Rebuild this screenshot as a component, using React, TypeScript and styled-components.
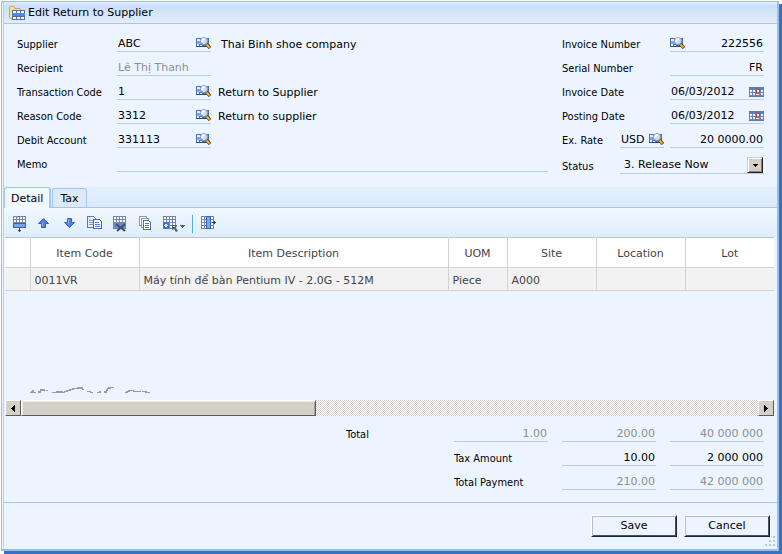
import React, { useState } from "react";
import styled, { createGlobalStyle, css } from "styled-components";

const WIDE = '"DejaVu Sans", Verdana, sans-serif';
const NARROW = '"DejaVu Sans Condensed", "DejaVu Sans", Tahoma, sans-serif';

const GlobalStyle = createGlobalStyle`
  *, *::before, *::after { box-sizing: border-box; }
  body { margin: 0; background: #fff; font: 11px/14px ${WIDE}; color: #000; }
  button, input, select { font: inherit; color: inherit; margin: 0; padding: 0; border: 0; border-radius: 0; background: none; }
  svg { display: block; flex: none; }
`;

const Page = styled.div`
  display: flex;
  min-height: 100vh;
  padding: 1px 3px 3px 1px;
`;

const Dialog = styled.section`
  flex: 1;
  min-width: 0;
  display: flex;
  flex-direction: column;
  padding-left: 1px;
  border: solid #9dbce9;
  border-width: 1px 2px 2px 1px;
  background: #ecf5ff;
  box-shadow: 3px 3px 0 #3571c6;
`;

const DialogInner = styled.div`
  flex: 1;
  min-width: 0;
  display: flex;
  flex-direction: column;
  border-left: 1px solid #b5d0f3;
`;

const TitleBar = styled.header`
  display: flex;
  align-items: center;
  gap: 3px;
  height: 22px;
  padding-left: 4px;
  border-bottom: 1px solid #a9c4ea;
  background: linear-gradient(#e3eefc, #cadef8 20%, #e3eefd);
`;

const Title = styled.h1`
  margin: 0;
  padding-top: 1px;
  font: inherit;
`;

const Form = styled.form`
  display: flex;
  gap: 14px;
  padding: 4px 13px 13px;
`;

const Column = styled.div<{ $side?: boolean }>`
  flex: ${(p) => (p.$side ? "0 0 202px" : "1")};
  min-width: 0;
`;

const Row = styled.div<{ $tall?: boolean }>`
  display: flex;
  align-items: flex-end;
  height: ${(p) => (p.$tall ? 26 : 24)}px;
`;

const Label = styled.label<{ $width: number }>`
  flex: 0 0 ${(p) => p.$width}px;
  font-family: ${NARROW};
`;

const IconButton = styled.button`
  flex: none;
  display: flex;
  align-items: center;
`;

const Field = styled.div<{ $width?: number; $muted?: boolean }>`
  flex: ${(p) => (p.$width ? `0 0 ${p.$width}px` : "1")};
  min-width: 0;
  display: flex;
  align-items: flex-end;
  height: 18px;
  border-bottom: 1px solid #b9cddd;
  color: ${(p) => (p.$muted ? "#8b8f94" : "#000")};
  ${IconButton} { padding-bottom: 2px; }
`;

const TextInput = styled.input<{ $right?: boolean }>`
  flex: 1;
  width: 100%;
  min-width: 0;
  height: 14px;
  padding: 0 1px;
  text-align: ${(p) => (p.$right ? "right" : "left")};
  outline: 0;
`;

const Description = styled.output<{ $indent?: boolean }>`
  padding-left: ${(p) => (p.$indent ? 10 : 7)}px;
  white-space: nowrap;
`;

const StatusField = styled(Field)`
  height: 20px;
  position: relative;
`;

const Select = styled.select`
  flex: 1;
  height: 16px;
  padding-left: 4px;
  appearance: none;
  outline: 0;
`;

const bevel = css`
  background: #d4d0c8;
  border: 1px solid;
  border-color: #fff #5b5b5b #5b5b5b #fff;
`;

const SelectArrow = styled.span`
  ${bevel}
  position: absolute;
  right: 1px;
  top: 3px;
  width: 16px;
  height: 16px;
  display: flex;
  align-items: center;
  justify-content: center;
  border-color: #d4d0c8 #222 #222 #d4d0c8;
  box-shadow: inset 1px 1px 0 #fff, inset -1px -1px 0 #85827c;
  pointer-events: none;
`;

const TabStrip = styled.div`
  display: flex;
  align-items: flex-end;
  gap: 1px;
  height: 21px;
  border-bottom: 1px solid #a3c5ee;
  background: linear-gradient(#e3effd, #dceafb);
`;

const Tab = styled.button<{ $active?: boolean }>`
  height: ${(p) => (p.$active ? 21 : 19)}px;
  margin-bottom: ${(p) => (p.$active ? -1 : 0)}px;
  padding: 1px ${(p) => (p.$active ? 6 : 7)}px 0;
  border: solid #a3c5ee;
  border-width: 1px 1px 0;
  border-right-width: ${(p) => (p.$active ? 2 : 1)}px;
  border-radius: 3px 3px 0 0;
  background: ${(p) => (p.$active ? "#f1f8ff" : "#dbe9fb")};
`;

const ToolBar = styled.div`
  display: flex;
  align-items: center;
  gap: 9px;
  height: 29px;
  padding: 3px 8px 0;
  background: linear-gradient(#f1f8ff, #deedfb);
`;

const MenuButton = styled(IconButton)`
  gap: 2px;
`;

const Separator = styled.span`
  width: 1px;
  height: 18px;
  margin: 0 -2px;
  background: #57a5f5;
  box-shadow: 1px 0 0 #fff;
`;

const GridArea = styled.div`
  flex: 1;
  min-height: 120px;
  display: flex;
  flex-direction: column;
  justify-content: space-between;
  margin: 0 3px 0 1px;
`;

const Table = styled.table`
  width: 100%;
  table-layout: fixed;
  border-collapse: collapse;
  color: #444;
`;

const Col = styled.col<{ $width?: number }>`
  width: ${(p) => (p.$width ? `${p.$width}px` : "auto")};
`;

const cell = css`
  border: solid #cfd2d6;
  border-width: 1px 1px 1px 0;
  overflow: hidden;
  white-space: nowrap;
  &:last-child { border-right: 0; }
`;

const HeadCell = styled.th`
  ${cell}
  height: 30px;
  padding: 2px 0 0;
  background: #fff;
  border-top-color: #bfc3cf;
  font-weight: normal;
`;

const Cell = styled.td`
  ${cell}
  height: 23px;
  padding: 3px 4px 0;
  background: #f2f2f2;
`;

const Traces = styled.svg`
  margin: 0 0 6px 24px;
`;

const ScrollBar = styled.div`
  display: flex;
  height: 16px;
  margin: 0 3px 0 1px;
  background: repeating-conic-gradient(#d4d0c8 0 25%, #fff 0 50%) 0 0 / 2px 2px;
`;

const ScrollButton = styled.button`
  ${bevel}
  flex: none;
  width: 16px;
  display: flex;
  align-items: center;
  justify-content: center;
`;

const ScrollTrack = styled.div`
  flex: 1;
  display: flex;
`;

const Thumb = styled.div`
  ${bevel}
  width: 40%;
  box-shadow: inset 1px 1px 0 #ece9e4, inset -1px 0 0 #a5a29c;
`;

const Totals = styled.div`
  display: grid;
  grid-template-columns: 94px 94px 94px;
  justify-content: end;
  column-gap: 14px;
  padding: 2px 13px 12px;
  border-bottom: 1px solid #a3c5ee;
`;

const TotalRow = styled.div`
  grid-column: 1 / -1;
  display: grid;
  grid-template-columns: subgrid;
  align-items: end;
  height: 24px;
  position: relative;
`;

const TotalLabel = styled.label<{ $outside?: boolean }>`
  font-family: ${NARROW};
  ${(p) => p.$outside && css`
    position: absolute;
    right: 100%;
    bottom: 0;
    width: 108px;
  `}
`;

const Footer = styled.footer`
  display: flex;
  justify-content: flex-end;
  gap: 7px;
  padding: 12px 7px 0;
  height: 46px;
  position: relative;
`;

const PushButton = styled.button`
  width: 86px;
  height: 22px;
  border: 1px solid;
  border-color: #fff #1c2733 #1c2733 #fff;
  box-shadow: inset 1px 1px 0 #b9bcc0, inset -1px -1px 0 #47525e;
  background: #ecf5ff;
`;

const Grip = styled.svg`
  position: absolute;
  right: 2px;
  bottom: 2px;
`;

const FolderIcon = () => (
  <svg width="17" height="14" viewBox="0 0 17 14" aria-hidden="true">
    <path d="M1.500 1.500q0-1 1-1h3q1 0 1 1v1h5q1 0 1 1v9h-10q-1 0-1-1z" fill="#fbe08c" stroke="#c9a560" />
    <g shapeRendering="crispEdges">
      <path d="M4 4h13v10H4z" fill="#4f6da9" />
      <path d="M5 5h3v2H5zM9 5h3v2H9zM13 5h3v2h-3zM5 11h3v2H5zM9 11h3v2H9zM13 11h3v2h-3z" fill="#fff" />
      <path d="M4 7h13v3H4z" fill="#4f86ec" />
    </g>
  </svg>
);

const LookupIcon = () => (
  <svg width="15" height="12" viewBox="0 0 15 12" aria-hidden="true">
    <g shapeRendering="crispEdges">
      <path d="M0 1h13v9H0z" fill="#4a72ba" />
      <path d="M0 9h11v1H0z" fill="#2f4a80" />
      <path d="M1 2h3v2H1zM1 7h2v2H1zM4 8h2v1H4z" fill="#e4edfb" />
      <path d="M1 4h5v3H1z" fill="#7ba5ef" />
    </g>
    <circle cx="8" cy="4" r="3.500" fill="#cfdeee" stroke="#8a9db6" />
    <path d="M6 5a2.500 2.500 0 0 1 3-3" stroke="#fff" strokeWidth="2" fill="none" />
    <path d="M10.500 7l3.500 4" stroke="#5f4520" strokeWidth="3.500" />
    <path d="M10.500 7.500l3 3" stroke="#f3b02c" strokeWidth="2" />
  </svg>
);

const CalendarIcon = () => (
  <svg width="15" height="10" viewBox="0 0 15 10" shapeRendering="crispEdges" aria-hidden="true">
    <path d="M0 0h15v10H0z" fill="#6587c4" />
    <path d="M0 0h15v2H0zM0 9h15v1H0z" fill="#5d7ab3" />
    <path d="M1 3h2v2H1zM4 3h2v2H4zM12 3h2v2h-2zM1 6h2v2H1zM4 6h2v2H4zM7 7h3v1H7zM12 6h2v2h-2z" fill="#eef5ff" />
    <path d="M7 2h4v4H7z" fill="#e0401f" />
    <path d="M8 3h2v2H8z" fill="#fff" />
  </svg>
);

const Triangle = ({ dir }: { dir: "left" | "right" | "down" | "menu" }) => {
  if (dir === "left") return <svg width="4" height="7" viewBox="0 0 4 7" shapeRendering="crispEdges" aria-hidden="true"><path d="M3 0h1v7H3zM2 1h1v5H2zM1 2h1v3H1zM0 3h1v1H0z" /></svg>;
  if (dir === "right") return <svg width="4" height="7" viewBox="0 0 4 7" shapeRendering="crispEdges" aria-hidden="true"><path d="M0 0h1v7H0zM1 1h1v5H1zM2 2h1v3H2zM3 3h1v1H3z" /></svg>;
  if (dir === "down") return <svg width="5" height="3" viewBox="0 0 5 3" shapeRendering="crispEdges" aria-hidden="true"><path d="M0 0h5v1H0zM1 1h3v1H1zM2 2h1v1H2z" /></svg>;
  return <svg width="5" height="8" viewBox="0 0 5 8" shapeRendering="crispEdges" aria-hidden="true"><path d="M0 5h5v1H0zM1 6h3v1H1zM2 7h1v1H2z" fill="#46608f" /></svg>;
};

const SheetIcon = ({ kind }: { kind: "insert" | "delete" | "menu" | "columns" }) => (
  <svg width="16" height="16" viewBox="0 0 16 16" shapeRendering="crispEdges" aria-hidden="true">
    <path d="M1 0h13v13H1z" fill="#7584a8" />
    {[2, 5, 8, 11].map((x) => [1, 4, 7, 10].map((y) => (
      <rect key={`${x}-${y}`} x={x} y={y} width="2" height="2" fill="#fff" />
    )))}
    {kind === "insert" && (
      <>
        <path d="M1 7h13v5H1z" fill="#3d62b1" />
        <path d="M2 8h11v3H2z" fill="#72a4f5" />
        <path d="M1 12h13v1H1z" fill="#eaf4fe" />
        <path d="M7 12h1v4H7zM6 14h3v1H6z" fill="#33435f" />
      </>
    )}
    {kind === "delete" && (
      <>
        <path d="M1 7h13v5H1z" fill="#5f8de4" />
        <path d="M4 8l9 7M13 8l-8 7" stroke="#4b4f56" strokeWidth="2" fill="none" shapeRendering="auto" />
      </>
    )}
    {kind === "menu" && (
      <>
        <path d="M1 6h6v7H1z" fill="#3f74dc" />
        <path d="M2 9h4v1H2zM3 8h2v3H3z" fill="#dcebff" />
        <path d="M10 9h5l-1 3 2 3-2 1-2-3-2 1z" fill="#58606d" shapeRendering="auto" />
        <path d="M11 10h2v1h-2z" fill="#fff" />
      </>
    )}
    {kind === "columns" && (
      <>
        <path d="M6 0h5v13H6z" fill="#3962b3" />
        <path d="M7 1h3v11H7z" fill="#72a8f8" />
        <path d="M12 6h4v1h-4zM14 5h1v3h-1z" fill="#2f3e58" />
      </>
    )}
  </svg>
);

const ArrowIcon = ({ down }: { down?: boolean }) => (
  <svg width="16" height="16" viewBox="0 0 16 16" aria-hidden="true">
    <path
      d={down ? "M5.500 2.500h4v4h3l-5 5-5-5h3z" : "M4.500 11.500h4v-4h3l-5-5-5 5h3z"}
      fill="#4d83eb"
      stroke="#345fb7"
    />
    <path d={down ? "M6.500 3v4.500" : "M5.500 7v3.500"} stroke="#8fb9ff" />
  </svg>
);

const CopyIcon = () => (
  <svg width="16" height="16" viewBox="0 0 16 16" shapeRendering="crispEdges" aria-hidden="true">
    <path d="M.5 .5h6l3 3v8h-9z" fill="#e8f1ff" stroke="#5c77a8" />
    <path d="M2 4h4v1H2zM2 6h4v1H2zM2 8h4v1H2z" fill="#6f94d8" />
    <path d="M6.500 3.500h6l2 2v7h-8z" fill="#f4f8ff" stroke="#4869a8" />
    <path d="M8 6h4v1H8zM8 8h5v1H8zM8 10h5v1H8z" fill="#4f84e5" />
  </svg>
);

const StackIcon = () => (
  <svg width="16" height="16" viewBox="0 0 16 16" shapeRendering="crispEdges" aria-hidden="true">
    <path d="M2.500 .5h7v9h-7z" fill="#fff" stroke="#8898b8" />
    <path d="M4.500 2.500h7v9h-7z" fill="#fff" stroke="#8898b8" />
    <path d="M6.500 4.500h5l2 2v7h-7z" fill="#fff" stroke="#566d9a" />
    <path d="M8 7h4v1H8zM8 9h4v1H8zM8 11h4v1H8z" fill="#4f79cf" />
  </svg>
);

type LookupProps = { id: string; label: string; value: string; note?: string; indent?: boolean; plain?: boolean; muted?: boolean };

const LookupRow = ({ id, label, value, note, indent, plain, muted }: LookupProps) => (
  <Row>
    <Label htmlFor={id} $width={100}>{label}</Label>
    <Field $width={94} $muted={muted}>
      <TextInput id={id} defaultValue={value} readOnly={muted} />
      {!plain && <IconButton type="button" aria-label={`Find ${label}`}><LookupIcon /></IconButton>}
    </Field>
    {note && <Description htmlFor={id} $indent={indent}>{note}</Description>}
  </Row>
);

const DateRow = ({ id, label, value }: { id: string; label: string; value: string }) => (
  <Row>
    <Label htmlFor={id} $width={108}>{label}</Label>
    <Field $width={94}>
      <TextInput id={id} defaultValue={value} />
      <IconButton type="button" aria-label={`Pick ${label}`}><CalendarIcon /></IconButton>
    </Field>
  </Row>
);

const Amount = ({ id, label, value, muted }: { id?: string; label: string; value: string; muted?: boolean }) => (
  <Field $muted={muted}>
    <TextInput id={id} aria-label={label} defaultValue={value} readOnly={muted} $right />
  </Field>
);

const columns = [
  { name: "", width: 25 },
  { name: "Item Code", width: 109 },
  { name: "Item Description", width: 309 },
  { name: "UOM", width: 59 },
  { name: "Site", width: 89 },
  { name: "Location", width: 89 },
  { name: "Lot" },
];
const item = ["", "0011VR", "Máy tính để bàn Pentium IV - 2.0G - 512M", "Piece", "A000", "", ""];

export default function App() {
  const [tab, setTab] = useState("Detail");
  return (
    <>
      <GlobalStyle />
      <Page>
        <Dialog aria-labelledby="title">
          <DialogInner>
            <TitleBar>
              <FolderIcon />
              <Title id="title">Edit Return to Supplier</Title>
            </TitleBar>
            <Form>
              <Column>
                <LookupRow id="supplier" label="Supplier" value="ABC" note="Thai Binh shoe company" indent />
                <LookupRow id="recipient" label="Recipient" value="Lê Thị Thanh" plain muted />
                <LookupRow id="transaction" label="Transaction Code" value="1" note="Return to Supplier" />
                <LookupRow id="reason" label="Reason Code" value="3312" note="Return to supplier" />
                <LookupRow id="debit" label="Debit Account" value="331113" />
                <Row>
                  <Label htmlFor="memo" $width={100}>Memo</Label>
                  <Field><TextInput id="memo" /></Field>
                </Row>
              </Column>
              <Column $side>
                <Row>
                  <Label htmlFor="invoice" $width={108}>Invoice Number</Label>
                  <Field>
                    <IconButton type="button" aria-label="Find invoice"><LookupIcon /></IconButton>
                    <TextInput id="invoice" defaultValue="222556" $right />
                  </Field>
                </Row>
                <Row>
                  <Label htmlFor="serial" $width={108}>Serial Number</Label>
                  <Field><TextInput id="serial" defaultValue="FR" $right /></Field>
                </Row>
                <DateRow id="invoice-date" label="Invoice Date" value="06/03/2012" />
                <DateRow id="posting-date" label="Posting Date" value="06/03/2012" />
                <Row>
                  <Label htmlFor="rate" $width={58}>Ex. Rate</Label>
                  <Field $width={44}>
                    <TextInput aria-label="Currency" defaultValue="USD" />
                    <IconButton type="button" aria-label="Find currency"><LookupIcon /></IconButton>
                  </Field>
                  <Label as="span" $width={6} />
                  <Field><TextInput id="rate" defaultValue="20 0000.00" $right /></Field>
                </Row>
                <Row $tall>
                  <Label htmlFor="status" $width={58}>Status</Label>
                  <StatusField>
                    <Select id="status" defaultValue="3">
                      <option value="3">3. Release Now</option>
                    </Select>
                    <SelectArrow><Triangle dir="down" /></SelectArrow>
                  </StatusField>
                </Row>
              </Column>
            </Form>

            <TabStrip role="tablist">
              {["Detail", "Tax"].map((name) => (
                <Tab key={name} type="button" role="tab" aria-selected={tab === name} $active={tab === name} onClick={() => setTab(name)}>
                  {name}
                </Tab>
              ))}
            </TabStrip>
            <ToolBar role="toolbar">
              <IconButton aria-label="Insert row"><SheetIcon kind="insert" /></IconButton>
              <IconButton aria-label="Move up"><ArrowIcon /></IconButton>
              <IconButton aria-label="Move down"><ArrowIcon down /></IconButton>
              <IconButton aria-label="Copy row"><CopyIcon /></IconButton>
              <IconButton aria-label="Delete row"><SheetIcon kind="delete" /></IconButton>
              <IconButton aria-label="Duplicate rows"><StackIcon /></IconButton>
              <MenuButton aria-label="Grid tools"><SheetIcon kind="menu" /><Triangle dir="menu" /></MenuButton>
              <Separator />
              <IconButton aria-label="Columns"><SheetIcon kind="columns" /></IconButton>
            </ToolBar>

            <GridArea>
              <Table>
                <colgroup>
                  {columns.map((c) => <Col key={c.name} $width={c.width} />)}
                </colgroup>
                <thead>
                  <tr>{columns.map((c) => <HeadCell key={c.name} scope="col">{c.name}</HeadCell>)}</tr>
                </thead>
                <tbody>
                  <tr>{item.map((text, i) => <Cell key={columns[i].name}>{text}</Cell>)}</tr>
                </tbody>
              </Table>
              <Traces width="126" height="8" viewBox="0 0 126 8" shapeRendering="crispEdges" aria-hidden="true">
                <path d="M1 6h6v1H1zM2 5h3v1H2zM3 4h2v1H3zM9 5h3v2H9zM11 3h2v2h-2zM13 3h3v2h-3zM17 4h2v1h-2zM23 6h13v1H23zM27 5h7v1h-7zM35 5h4v1h-4zM37 4h5v1h-5zM40 3h5v1h-5zM43 2h11v1H43zM48 1h6v1h-6zM53 3h2v1h-2zM58 5h4v1h-4zM61 6h3v1h-3zM68 6h4v1h-4zM70 5h2v1h-2zM75 5h3v2h-3zM77 3h2v2h-2zM79 1h6v1h-6zM78 2h4v1h-4zM96 6h3v1h-3zM97 5h4v1h-4zM99 4h3v1h-3zM101 4h4v1h-4zM104 5h8v1h-8zM113 5h5v1h-5zM116 6h5v1h-5z" fill="#999b9e" />
              </Traces>
            </GridArea>
            <ScrollBar>
              <ScrollButton aria-label="Scroll left"><Triangle dir="left" /></ScrollButton>
              <ScrollTrack><Thumb /></ScrollTrack>
              <ScrollButton aria-label="Scroll right"><Triangle dir="right" /></ScrollButton>
            </ScrollBar>

            <Totals>
              <TotalRow>
                <TotalLabel $outside htmlFor="total">Total</TotalLabel>
                <Amount id="total" label="Total quantity" value="1.00" muted />
                <Amount label="Total price" value="200.00" muted />
                <Amount label="Total value" value="40 000 000" muted />
              </TotalRow>
              <TotalRow>
                <TotalLabel htmlFor="tax">Tax Amount</TotalLabel>
                <Amount id="tax" label="Tax price" value="10.00" />
                <Amount label="Tax value" value="2 000 000" />
              </TotalRow>
              <TotalRow>
                <TotalLabel htmlFor="payment">Total Payment</TotalLabel>
                <Amount id="payment" label="Payment price" value="210.00" muted />
                <Amount label="Payment value" value="42 000 000" muted />
              </TotalRow>
            </Totals>
            <Footer>
              <PushButton type="button">Save</PushButton>
              <PushButton type="button">Cancel</PushButton>
              <Grip width="11" height="11" viewBox="0 0 11 11" shapeRendering="crispEdges" aria-hidden="true">
                <path d="M9 0h2v2H9zM9 4h2v2H9zM5 4h2v2H5zM9 8h2v2H9zM5 8h2v2H5zM1 8h2v2H1z" fill="#a3ccf8" />
              </Grip>
            </Footer>
          </DialogInner>
        </Dialog>
      </Page>
    </>
  );
}
